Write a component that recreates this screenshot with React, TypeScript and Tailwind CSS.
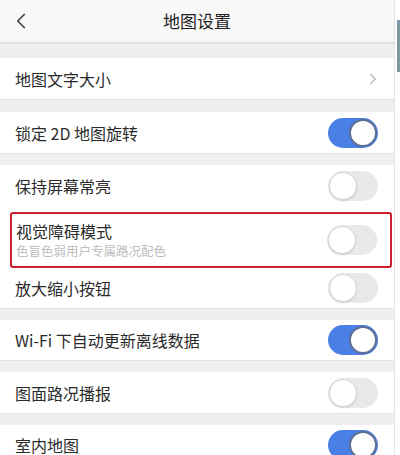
import { ChevronLeft, ChevronRight } from "lucide-react";

type ToggleProps = { on: boolean };

function Toggle({ on }: ToggleProps) {
  return (
    <div
      className={
        on
          ? "w-[50px] h-[30px] rounded-full bg-[#4a7fe6] flex items-center justify-end p-[1px]"
          : "w-[50px] h-[30px] rounded-full bg-[#e9e9e9] flex items-center justify-start p-[1px]"
      }
    >
      <div
        className={
          on
            ? "w-[28px] h-[28px] rounded-full bg-white border-2 border-[#5d6f96]"
            : "w-[28px] h-[28px] rounded-full bg-white border border-[#d8d8d8] shadow-[0_1px_2px_rgba(0,0,0,0.12)]"
        }
      />
    </div>
  );
}

function Gap({ h }: { h: string }) {
  return <div className={`${h} shrink-0 bg-[#efefef] border-t border-[#e2e2e2]`} />;
}

function Row({ label, on, h }: { label: string; on: boolean; h: string }) {
  return (
    <div className={`${h} shrink-0 bg-white flex items-center justify-between pl-[15px] pr-[16px]`}>
      <span className="text-[16px] text-[#2b2b2b]">{label}</span>
      <Toggle on={on} />
    </div>
  );
}

export default function App() {
  return (
    <div
      className="w-[400px] h-[455px] overflow-hidden flex bg-white"
      style={{ fontFamily: '"Noto Sans CJK SC", "Noto Sans", sans-serif' }}
    >
      <div className="w-[395px] shrink-0 flex flex-col border-r border-[#e4e4e4]">
        <header className="h-[43px] shrink-0 bg-[#f8f8f8] border-b border-[#dedede] flex items-center relative">
          <ChevronLeft size={26} strokeWidth={1.6} className="text-[#444] ml-[8px]" />
          <h1 className="absolute left-0 right-0 text-center text-[17px] text-[#222]">地图设置</h1>
        </header>

        <Gap h="h-[15px]" />
        <div className="h-[41px] shrink-0 bg-white flex items-center justify-between pl-[15px] pr-[12px]">
          <span className="text-[16px] text-[#2b2b2b]">地图文字大小</span>
          <ChevronRight size={18} strokeWidth={1.6} className="text-[#b5b5b5]" />
        </div>

        <Gap h="h-[13px]" />
        <Row label="锁定 2D 地图旋转" on h="h-[41px]" />

        <Gap h="h-[12px]" />
        <Row label="保持屏幕常亮" on={false} h="h-[42px]" />

        <div className="h-[61px] shrink-0 bg-white pl-[10px] pr-[2px] pt-[5px]">
          <div className="h-[56px] border-2 border-[#cf1f2e] rounded-[3px] flex items-center justify-between pl-[4px] pr-[13px]">
            <div className="flex flex-col">
              <span className="text-[16px] leading-[22px] text-[#2b2b2b]">视觉障碍模式</span>
              <span className="text-[12.5px] leading-[18px] text-[#bdbdbd]">色盲色弱用户专属路况配色</span>
            </div>
            <Toggle on={false} />
          </div>
        </div>

        <Row label="放大缩小按钮" on={false} h="h-[40px]" />

        <Gap h="h-[12px]" />
        <Row label="Wi-Fi 下自动更新离线数据" on h="h-[40px]" />

        <Gap h="h-[12px]" />
        <Row label="图面路况播报" on={false} h="h-[41px]" />

        <Gap h="h-[12px]" />
        <Row label="室内地图" on h="h-[40px]" />
      </div>

      <div className="flex-1 flex flex-col items-end bg-white">
        <div className="h-[20px]" />
        <div className="w-[3px] h-[52px] bg-[#7f99a3]" />
      </div>
    </div>
  );
}
